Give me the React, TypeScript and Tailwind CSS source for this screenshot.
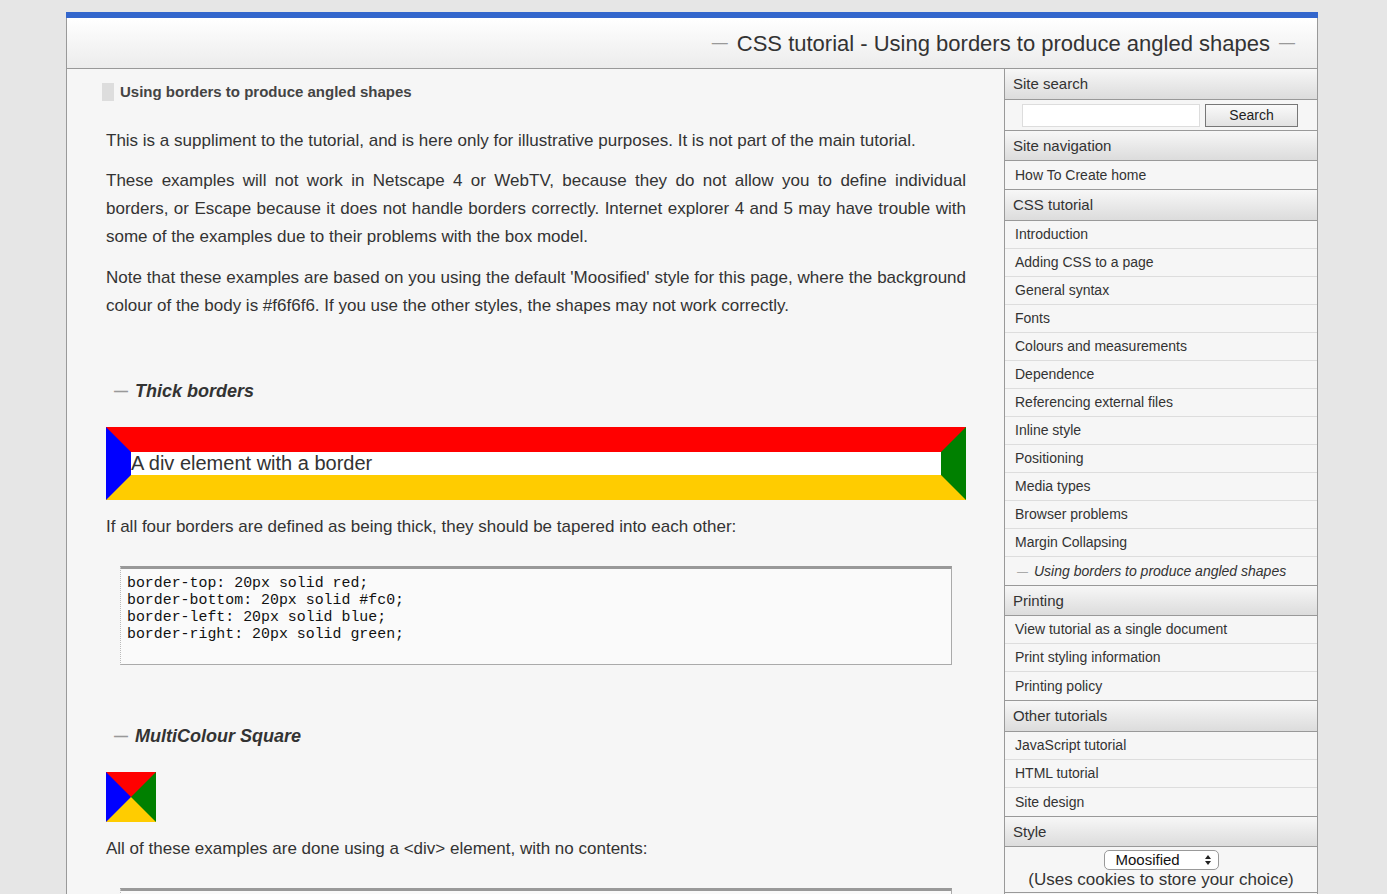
import React from "react";

const cssItems = [
  "Introduction",
  "Adding CSS to a page",
  "General syntax",
  "Fonts",
  "Colours and measurements",
  "Dependence",
  "Referencing external files",
  "Inline style",
  "Positioning",
  "Media types",
  "Browser problems",
  "Margin Collapsing",
];

const printingItems = [
  "View tutorial as a single document",
  "Print styling information",
  "Printing policy",
];

const otherItems = ["JavaScript tutorial", "HTML tutorial", "Site design"];

function SectionHeader({ title, short }: { title: string; short?: boolean }) {
  return (
    <div
      className={`${
        short ? "h-[30px]" : "h-[31px]"
      } flex items-center pl-2 pt-[1px] text-[15px] text-[#333] border-b border-[#999] bg-linear-to-b from-[#f7f7f7] to-[#dcdcdc]`}
    >
      {title}
    </div>
  );
}

function NavList({ items, last }: { items: string[]; last?: React.ReactNode }) {
  return (
    <div className="border-b border-[#999]">
      {items.map((item, i) => (
        <div
          key={item}
          className={`h-[28px] flex items-center pl-[10px] text-[14px] text-[#333] ${
            i < items.length - 1 || last ? "border-b border-[#ddd]" : ""
          }`}
        >
          {item}
        </div>
      ))}
      {last}
    </div>
  );
}

function SubHeading({ children }: { children: React.ReactNode }) {
  return (
    <h3 className="flex items-center gap-[7px] pl-2 text-[18px] leading-[28px] font-bold italic text-[#333]">
      <span className="text-[14px] text-[#999] not-italic">—</span>
      {children}
    </h3>
  );
}

function CodeBlock({ lines }: { lines: string[] }) {
  return (
    <pre className="mx-[14px] border-solid border-t-[3px] border-t-[#999] border-l border-l-[#bbb] [border-left-style:dotted] border-r border-r-[#aaa] border-b border-b-[#aaa] bg-[#fafafa] pl-[6px] pt-[6px] pb-[21px] font-['Liberation_Mono',monospace] text-[14.9px] leading-[17px] text-[#111]">
      {lines.join("\n")}
    </pre>
  );
}

export default function App() {
  return (
    <div className="min-h-screen bg-[#e6e6e6] pt-3 font-['Liberation_Sans',Arial,sans-serif] overflow-hidden">
      <div className="ml-[66px] w-[1252px]">
        <div className="h-[6px] bg-[#3366cc]" />
        <div className="h-[51px] flex items-center justify-end pr-[22px] border-x border-b border-[#999] bg-linear-to-b from-white to-[#ececec]">
          <h1 className="text-[22px] text-[#333] flex items-center gap-[9px]">
            <span className="text-[16px] text-[#999]">—</span>
            <span>CSS tutorial - Using borders to produce angled shapes</span>
            <span className="text-[16px] text-[#999]">—</span>
          </h1>
        </div>

        <div className="flex border-x border-[#999] bg-[#f6f6f6]">
          {/* Main content */}
          <main className="flex-1 pl-[39px] pr-[38px] pt-[14px] text-[#333]">
            <div className="flex items-center gap-[6px] -ml-[4px]">
              <span className="w-[12px] h-[18px] bg-[#ddd]" />
              <span className="text-[15px] leading-[18px] font-bold text-[#444]">
                Using borders to produce angled shapes
              </span>
            </div>

            <p className="mt-[26px] text-[17px] leading-[28px] text-justify">
              This is a suppliment to the tutorial, and is here only for illustrative purposes. It is not part of the main tutorial.
            </p>
            <p className="mt-[12px] text-[17px] leading-[28px] text-justify">
              These examples will not work in Netscape 4 or WebTV, because they do not allow you to define individual borders, or Escape because it does not handle borders correctly. Internet explorer 4 and 5 may have trouble with some of the examples due to their problems with the box model.
            </p>
            <p className="mt-[13px] text-[17px] leading-[28px] text-justify">
              Note that these examples are based on you using the default 'Moosified' style for this page, where the background colour of the body is #f6f6f6. If you use the other styles, the shapes may not work correctly.
            </p>

            <div className="mt-[57px]">
              <SubHeading>Thick borders</SubHeading>
            </div>
            <div className="mt-[22px] border-t-[25px] border-t-[#ff0000] border-b-[25px] border-b-[#ffcc00] border-l-[25px] border-l-[#0000ff] border-r-[25px] border-r-[#008000] bg-white text-[20px] leading-[23px] text-[#333]">
              A div element with a border
            </div>
            <p className="mt-[13px] text-[17px] leading-[28px]">
              If all four borders are defined as being thick, they should be tapered into each other:
            </p>
            <div className="mt-[25px]">
              <CodeBlock
                lines={[
                  "border-top: 20px solid red;",
                  "border-bottom: 20px solid #fc0;",
                  "border-left: 20px solid blue;",
                  "border-right: 20px solid green;",
                ]}
              />
            </div>

            <div className="mt-[57px]">
              <SubHeading>MultiColour Square</SubHeading>
            </div>
            <div className="mt-[22px] box-content w-0 h-0 border-t-[25px] border-t-[#ff0000] border-b-[25px] border-b-[#ffcc00] border-l-[25px] border-l-[#0000ff] border-r-[25px] border-r-[#008000]" />
            <p className="mt-[13px] text-[17px] leading-[28px]">
              All of these examples are done using a &lt;div&gt; element, with no contents:
            </p>
            <div className="mt-[25px]">
              <CodeBlock
                lines={[
                  "width: 0px;",
                  "height: 0px;",
                  "border-top: 25px solid red;",
                  "border-bottom: 25px solid #fc0;",
                ]}
              />
            </div>
          </main>

          {/* Sidebar */}
          <aside className="w-[313px] border-l border-[#999] bg-[#f6f6f6]">
            <SectionHeader title="Site search" />
            <div className="h-[31px] flex items-center justify-center gap-[5px] border-b border-[#999] pr-[2px]">
              <div className="w-[178px] h-[23px] border border-[#ddd] bg-white" />
              <button className="w-[93px] h-[23px] border border-[#777] bg-linear-to-b from-[#fafafa] to-[#e2e2e2] text-[14px] text-[#222]">
                Search
              </button>
            </div>

            <SectionHeader title="Site navigation" short />
            <NavList items={["How To Create home"]} />

            <SectionHeader title="CSS tutorial" />
            <NavList
              items={cssItems}
              last={
                <div className="h-[28px] flex items-center pl-[12px] gap-[6px] text-[14px] text-[#333]">
                  <span className="text-[11px] text-[#999]">—</span>
                  <span className="italic">Using borders to produce angled shapes</span>
                </div>
              }
            />

            <SectionHeader title="Printing" short />
            <NavList items={printingItems} />

            <SectionHeader title="Other tutorials" />
            <NavList items={otherItems} />

            <SectionHeader title="Style" short />
            <div className="flex flex-col items-center pt-[3px] pb-[2px] border-b border-[#999]">
              <div className="w-[115px] h-[20px] rounded-[5px] border border-[#999] bg-white flex items-center pl-[11px] pr-[6px] justify-between text-[15px] text-[#111]">
                <span>Moosified</span>
                <svg width="8" height="12" viewBox="0 0 8 12">
                  <path d="M4 1 L7 5 L1 5 Z" fill="#222" />
                  <path d="M4 11 L7 7 L1 7 Z" fill="#222" />
                </svg>
              </div>
              <div className="text-[17px] leading-[20px] text-[#333]">
                (Uses cookies to store your choice)
              </div>
            </div>
            <div className="h-[60px]" />
          </aside>
        </div>
      </div>
    </div>
  );
}
